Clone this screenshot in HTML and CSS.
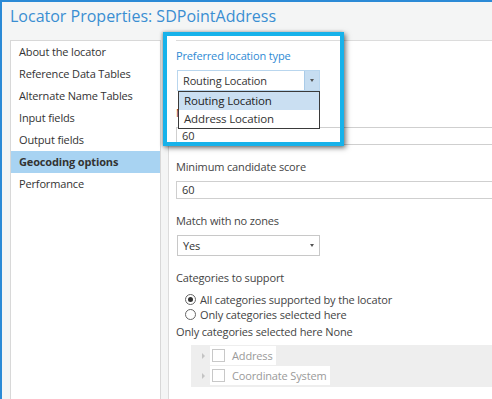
FILE: index.html
```html
<!DOCTYPE html>
<html lang="en">
<head>
    <meta charset="UTF-8">
    <meta name="viewport" content="width=device-width, initial-scale=1.0">
    <title>Locator Properties</title>
    <link rel="stylesheet" href="styles.css">
</head>
<body>
    <div class="window">
        <h1 class="title">Locator Properties: SDPointAddress</h1>
        <div class="content">
            <ul class="nav">
                <li>About the locator</li>
                <li>Reference Data Tables</li>
                <li>Alternate Name Tables</li>
                <li>Input fields</li>
                <li>Output fields</li>
                <li class="active">Geocoding options</li>
                <li>Performance</li>
            </ul>
            <div class="panel">
                <div class="field first">
                    <div class="label focused">Preferred location type</div>
                    <div class="select open">
                        <span>Routing Location</span>
                        <span class="arrow"></span>
                        <ul class="options">
                            <li class="selected">Routing Location</li>
                            <li>Address Location</li>
                        </ul>
                    </div>
                </div>
                <div class="field">
                    <div class="label hidden-label">Minimum match score</div>
                    <div class="input">60</div>
                </div>
                <div class="field">
                    <div class="label">Minimum candidate score</div>
                    <div class="input">60</div>
                </div>
                <div class="field">
                    <div class="label">Match with no zones</div>
                    <div class="select">
                        <span>Yes</span>
                        <span class="arrow"></span>
                    </div>
                </div>
                <div class="field">
                    <div class="label">Categories to support</div>
                    <div class="radio checked">All categories supported by the locator</div>
                    <div class="radio">Only categories selected here</div>
                    <div class="label note">Only categories selected here None</div>
                    <div class="tree">
                        <div class="tree-row"><span class="expander"></span><span class="item"><span class="check"></span>Address</span></div>
                        <div class="tree-row"><span class="expander"></span><span class="item"><span class="check"></span>Coordinate System</span></div>
                    </div>
                </div>
            </div>
            <!-- callout drawn over the screenshot -->
            <div class="highlight"></div>
        </div>
    </div>
</body>
</html>
```

FILE: styles.css
```css
body {
    margin: 0;
    padding: 0;
    background-color: #f4f5f5;
    font-family: "Open Sans", "Noto Sans", sans-serif;
    font-size: 11px;
    letter-spacing: -0.15px;
    color: #444;
    overflow: hidden;
}

.window {
    height: 397px;
    border-top: 2px solid #2b8ad6;
    border-left: 2px solid #2b8ad6;
    overflow: hidden;
}

.title {
    margin: 0;
    padding: 2px 0 0 8px;
    height: 36px;
    font-size: 16px;
    font-weight: normal;
    letter-spacing: 0;
    line-height: 24px;
    color: #3a8ed2;
}

.content {
    position: relative;
    display: flex;
    padding-left: 8px;
    height: 359px;
}

.nav {
    list-style: none;
    margin: 0;
    padding: 0;
    width: 149px;
    border: 1px solid #d8d8d8;
    border-bottom: none;
    background-color: #fff;
    flex-shrink: 0;
}

.nav li {
    height: 22px;
    line-height: 22px;
    padding-left: 8px;
    color: #333;
}

.nav li.active {
    background-color: #a8d3f2;
    font-weight: bold;
}

.panel {
    flex: 1;
    margin-left: 7px;
    padding: 7px 0 0 7px;
    border-left: 1px solid #dcdcdc;
    border-top: 1px solid #dcdcdc;
    background-color: #fff;
    overflow: hidden;
}

.field {
    margin-top: 14px;
}

.field.first {
    margin-top: 0;
}

.label {
    line-height: 16px;
    margin-bottom: 6px;
    white-space: nowrap;
}

.label.focused {
    color: #2f8ad4;
}

.label.hidden-label {
    color: #8a3a2a;
}

.input {
    width: 400px;
    height: 16px;
    line-height: 16px;
    padding-left: 5px;
    border: 1px solid #cfcfcf;
    color: #333;
}

.select {
    position: relative;
    margin-left: 1px;
    width: 136px;
    height: 19px;
    line-height: 19px;
    padding-left: 5px;
    border: 1px solid #c8c8c8;
    color: #333;
}

.select .arrow {
    position: absolute;
    right: 0;
    top: 0;
    width: 14px;
    height: 19px;
}

.select .arrow::after {
    content: "";
    position: absolute;
    left: 5px;
    top: 8px;
    border-left: 2px solid transparent;
    border-right: 2px solid transparent;
    border-top: 3px solid #555;
}

.select.open {
    border-color: #b9d6ee;
}

.select.open .arrow {
    background-color: #c6ddf1;
    border-left: 1px solid #a9cbe8;
}

.options {
    position: absolute;
    z-index: 2;
    left: 0;
    top: 20px;
    width: 140px;
    margin: 0;
    padding: 0;
    list-style: none;
    border: 1px solid #3a3a3a;
    background-color: #fff;
}

.options li {
    height: 18px;
    line-height: 18px;
    padding-left: 5px;
    font-size: 11.5px;
    color: #333;
}

.options li.selected {
    background-color: #cadff2;
    color: #222;
}

.radio {
    position: relative;
    margin-left: 9px;
    padding-left: 15px;
    line-height: 15px;
    white-space: nowrap;
}

.radio::before {
    content: "";
    position: absolute;
    left: 0;
    top: 2px;
    width: 9px;
    height: 9px;
    border: 1px solid #666;
    border-radius: 50%;
    background-color: #fff;
}

.radio.checked::after {
    content: "";
    position: absolute;
    left: 3px;
    top: 5px;
    width: 5px;
    height: 5px;
    border-radius: 50%;
    background-color: #333;
}

.label.note {
    margin-top: 2px;
    margin-bottom: 5px;
}

.tree {
    margin-left: 15px;
    width: 400px;
    padding: 1px 0;
    background-color: #eeeeee;
}

.tree-row {
    display: flex;
    align-items: center;
    height: 19px;
    margin-bottom: 1px;
}

.expander {
    width: 0;
    height: 0;
    margin: 0 5px 0 11px;
    border-top: 3px solid transparent;
    border-bottom: 3px solid transparent;
    border-left: 3px solid #c4c4c4;
}

.item {
    display: flex;
    align-items: center;
    height: 19px;
    padding: 0 3px 0 2px;
    background-color: #fff;
    color: #9a9a9a;
}

.check {
    width: 11px;
    height: 11px;
    margin-right: 7px;
    border: 1px solid #c8c8c8;
    background-color: #fff;
}

.highlight {
    position: absolute;
    left: 161px;
    top: -8px;
    width: 173px;
    height: 106px;
    border: 4px solid #17b2ea;
    box-shadow: 2px 2px 5px rgba(0, 0, 0, 0.5), -1px 0 3px rgba(0, 0, 0, 0.25);
    pointer-events: none;
    z-index: 3;
}

.highlight::before {
    content: "";
    position: absolute;
    left: 0;
    top: 0;
    width: 9px;
    height: 100%;
    background-color: #fff;
}

.highlight::after {
    content: "";
    position: absolute;
    left: 0;
    top: 0;
    width: 100%;
    height: 4px;
    background-color: #fff;
}
```
